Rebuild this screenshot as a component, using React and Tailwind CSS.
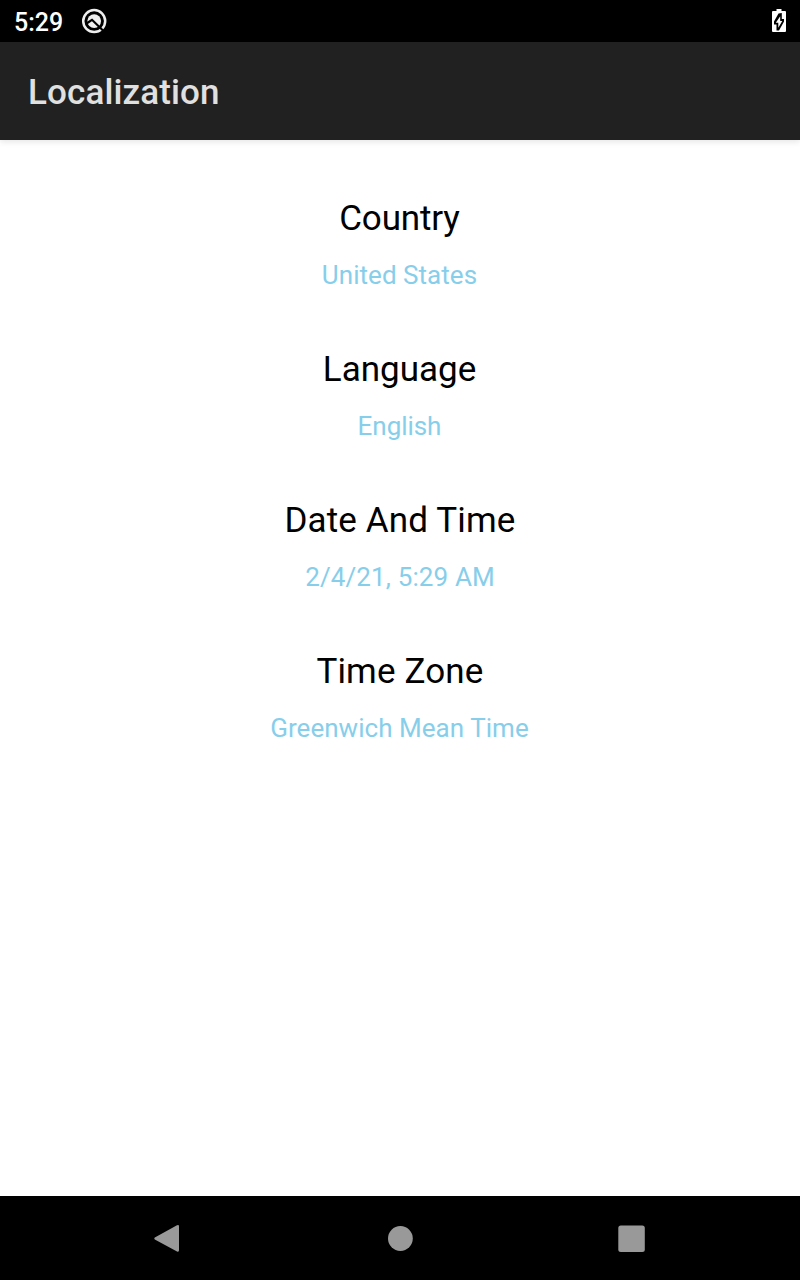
const rows = [
  ["Country", "United States", "tracking-[-0.15px]", "tracking-[0.04px]"],
  ["Language", "English", "tracking-normal", "tracking-[-0.05px]"],
  ["Date And Time", "2/4/21, 5:29 AM", "pl-px tracking-[0.15px]", "pl-px tracking-[0.13px]"],
  ["Time Zone", "Greenwich Mean Time", "pl-px tracking-[0.15px]", "tracking-[0.04px]"],
];

export default function App() {
  return (
    <div className="flex h-[1280px] w-[800px] flex-col overflow-hidden bg-white font-['Roboto',sans-serif]">
      <div className="flex h-[42px] shrink-0 items-center bg-black px-[14px] text-white">
        <span className="w-[67px] pt-[3px] text-[25px] font-medium leading-[31px]">5:29</span>
        <svg className="size-[26px]" viewBox="0 0 26 26" fill="none">
          <circle cx="13.200" cy="13.100" r="11" stroke="#eee" strokeWidth="2.500" />
          <circle cx="13.200" cy="13.100" r="6.900" fill="#eee" />
          <path d="M5.500 15.500L11 11.800L22 22.500" stroke="#000" strokeWidth="2.200" />
        </svg>
        <svg className="ml-auto h-[24px] w-[14px]" viewBox="0 0 14 24">
          <path d="M4.500 0h5v2H13q1 0 1 1v19q0 1-1 1H1q-1 0-1-1V3q0-1 1-1h3.500z" fill="#fff" />
          <path d="M9.800 4L6.500 4.500L2 12.500V15.500H4.500V21.500H7L12 12.500V10H9.800z" fill="#000" />
          <path d="M8.200 7.300L3.800 13.800h2.500v4.900L10.300 12H8.200z" fill="#fff" />
        </svg>
      </div>
      <header className="z-10 flex h-[98px] shrink-0 items-center bg-[#212121] px-7 shadow-[0_2px_6px_rgba(0,0,0,0.10)]">
        <h1 className="pt-[4px] text-[35px] font-medium leading-[42px] tracking-[0.12px] text-[#e0e0e0]">Localization</h1>
      </header>
      <main className="flex flex-1 flex-col items-center pr-px pt-[58px]">
        {rows.map(([label, value, labelTracking, valueTracking]) => (
          <section key={label} className="flex h-[151px] flex-col items-center">
            <h2 className={`text-[35px] leading-[42px] text-black ${labelTracking}`}>{label}</h2>
            <p className={`mt-[20px] text-[26px] leading-[30px] text-[#87ceeb] ${valueTracking}`}>{value}</p>
          </section>
        ))}
      </main>
      <nav className="flex h-[84px] shrink-0 items-center justify-between bg-black pl-[154px] pr-[155px]">
        <svg className="h-[28px] w-[25px]" viewBox="0 0 25 28" fill="#999">
          <path d="M23 1.300Q25 .2 25 2.400V26.200Q25 28.200 23 27.400L.8 15.500Q-.2 14.500.8 13.400z" />
        </svg>
        <svg className="h-[26px] w-[29px]" viewBox="0 0 29 26" fill="#999">
          <circle cx="16.400" cy="13.500" r="12.400" />
        </svg>
        <svg className="size-[27px]" viewBox="0 0 27 27" fill="#999">
          <rect x="0.300" y="0.500" width="26.500" height="26.500" rx="2.500" />
        </svg>
      </nav>
    </div>
  );
}
